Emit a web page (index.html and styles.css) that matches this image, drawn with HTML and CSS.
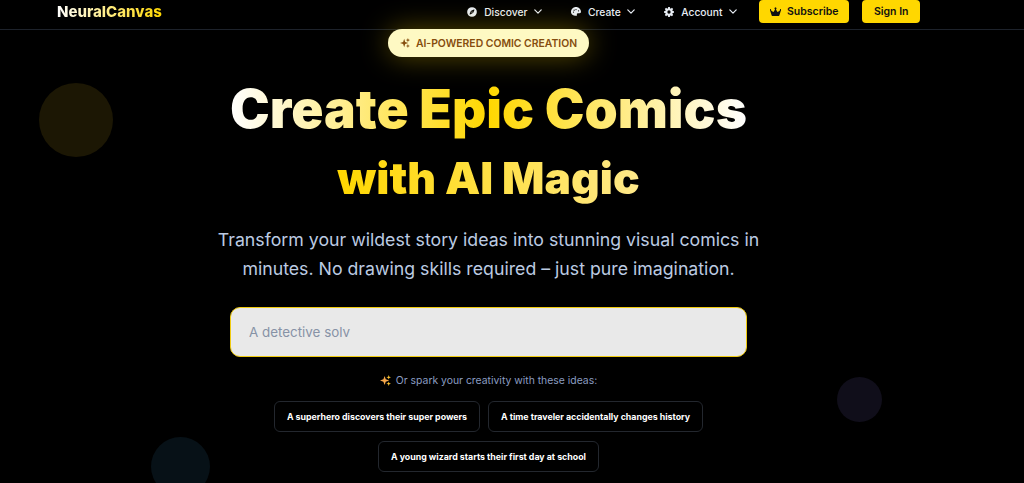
FILE: index.html
```html
<!DOCTYPE html>
<html lang="en">
<head>
    <meta charset="UTF-8">
    <meta name="viewport" content="width=device-width, initial-scale=1.0">
    <title>NeuralCanvas</title>
    <link rel="stylesheet" href="styles.css">
</head>
<body>

<!-- Navigation Bar -->
<div class="navbar">
    <div class="logo">NeuralCanvas</div>
    <div class="nav-links">
        <a href="#" class="nav-link">
            <svg class="nav-icon" viewBox="0 0 512 512"><path fill="currentColor" d="M256 8a248 248 0 1 0 0 496 248 248 0 0 0 0-496zm126 147-65 142a32 32 0 0 1-16 16l-142 65c-16 7-33-10-26-26l65-142a32 32 0 0 1 16-16l142-65c16-7 33 10 26 26zM256 224a32 32 0 1 0 0 64 32 32 0 0 0 0-64z"/></svg>
            Discover
            <svg class="chevron" viewBox="0 0 10 6"><path d="M1 1l4 4 4-4" fill="none" stroke="currentColor" stroke-width="1.5" stroke-linecap="round" stroke-linejoin="round"/></svg>
        </a>
        <a href="#" class="nav-link">
            <svg class="nav-icon" viewBox="0 0 512 512"><path fill="currentColor" fill-rule="evenodd" d="M512 256c0 1 0 2 0 3-1 36-34 61-70 61h-98a48 48 0 0 0-41 73c4 7 7 14 7 22 0 16-10 31-26 34-9 2-18 3-28 3C115 452 0 367 0 256 0 115 115 0 256 0s256 115 256 256zM128 288a32 32 0 1 0 0-64 32 32 0 0 0 0 64zm32-96a32 32 0 1 0 0-64 32 32 0 0 0 0 64zm128-64a32 32 0 1 0-64 0 32 32 0 0 0 64 0zm96 96a32 32 0 1 0 0-64 32 32 0 0 0 0 64z"/></svg>
            Create
            <svg class="chevron" viewBox="0 0 10 6"><path d="M1 1l4 4 4-4" fill="none" stroke="currentColor" stroke-width="1.5" stroke-linecap="round" stroke-linejoin="round"/></svg>
        </a>
        <a href="#" class="nav-link nav-link-last">
            <svg class="nav-icon" viewBox="0 0 24 24"><path fill="currentColor" fill-rule="evenodd" d="M10 0h4l.6 3.200 1.700.7L19 2l3 3-1.900 2.700.7 1.700L24 10v4l-3.200.6-.7 1.700L22 19l-3 3-2.700-1.900-1.700.7L14 24h-4l-.6-3.200-1.700-.7L5 22l-3-3 1.900-2.700-.7-1.700L0 14v-4l3.200-.6.7-1.700L2 5l3-3 2.700 1.900 1.700-.7L10 0zm2 8a4 4 0 1 0 0 8 4 4 0 0 0 0-8z"/></svg>
            Account
            <svg class="chevron" viewBox="0 0 10 6"><path d="M1 1l4 4 4-4" fill="none" stroke="currentColor" stroke-width="1.5" stroke-linecap="round" stroke-linejoin="round"/></svg>
        </a>
        <a href="#" class="btn btn-subscribe">
            <svg class="crown" viewBox="0 0 576 512"><path fill="currentColor" d="M309 106a48 48 0 1 0-42 0L203 233c-10 20-36 26-54 12l-100-80a48 48 0 1 0-39 27l78 247c4 13 16 23 30 23h340c14 0 26-10 30-23l78-247a48 48 0 1 0-39-27l-100 80c-18 14-44 8-54-12L309 106z"/></svg>
            Subscribe
        </a>
        <a href="#" class="btn">Sign In</a>
    </div>
</div>

<!-- Background Circles -->
<div class="circle circle-yellow"></div>
<div class="circle circle-blue"></div>
<div class="circle circle-purple"></div>

<div class="hero">
    <div class="badge">
        <svg class="badge-icon" viewBox="0 0 24 24"><path fill="currentColor" d="M10 2l2.500 7.500L20 12l-7.500 2.500L10 22l-2.500-7.500L0 12l7.500-2.500zM19 0l1.300 3.700L24 5l-3.700 1.300L19 10l-1.300-3.700L14 5l3.700-1.300zM19 14l1.300 3.700L24 19l-3.700 1.300L19 24l-1.300-3.700L14 19l3.700-1.300z"/></svg>
        AI-Powered Comic Creation
    </div>

    <h1 class="title">Create Epic Comics</h1>
    <h2 class="subtitle">with AI Magic</h2>

    <p class="lead">Transform your wildest story ideas into stunning visual comics in minutes. No drawing skills required – just pure imagination.</p>

    <input class="prompt" type="text" placeholder="A detective solv">

    <p class="hint">
        <svg class="hint-icon" viewBox="0 0 24 24"><path fill="#f6a84c" d="M10 2l2.500 7.500L20 12l-7.500 2.500L10 22l-2.500-7.500L0 12l7.500-2.500z"/><path fill="#fbc02d" d="M19 0l1.300 3.700L24 5l-3.700 1.300L19 10l-1.300-3.700L14 5l3.700-1.300zM19 14l1.300 3.700L24 19l-3.700 1.300L19 24l-1.300-3.700L14 19l3.700-1.300z"/></svg>
        Or spark your creativity with these ideas:
    </p>

    <div class="ideas">
        <button class="idea" type="button">A superhero discovers their super powers</button>
        <button class="idea" type="button">A time traveler accidentally changes history</button>
        <button class="idea" type="button">A young wizard starts their first day at school</button>
    </div>
</div>

</body>
</html>
```

FILE: styles.css
```css
/* Basic Reset */
* {
    box-sizing: border-box;
    margin: 0;
    padding: 0;
    font-family: Inter, "Liberation Sans", sans-serif;
}

body {
    position: relative;
    height: 483px;
    overflow: hidden;
    background-color: #000;
    color: #fff;
}

/* Navigation Bar */
.navbar {
    height: 30px;
    display: flex;
    justify-content: space-between;
    padding: 0 104px 0 57px;
    border-bottom: 1px solid #1d222b;
}

.logo {
    font-size: 15px;
    font-weight: 800;
    line-height: 23px;
    background: linear-gradient(90deg, #fff 0%, #ffd700 100%);
    -webkit-background-clip: text;
    background-clip: text;
    color: transparent;
}

.nav-links {
    display: flex;
    align-items: flex-start;
}

.nav-link {
    display: flex;
    align-items: center;
    height: 23px;
    margin-right: 29px;
    color: #e8edf4;
    font-size: 10.3px;
    font-weight: 500;
    text-decoration: none;
}

.nav-link-last {
    margin-right: 22px;
}

.nav-icon {
    width: 10px;
    height: 10px;
    margin-right: 7px;
}

.chevron {
    width: 8px;
    height: 5px;
    margin-left: 6.5px;
}

.btn {
    display: flex;
    align-items: center;
    height: 23px;
    margin-left: 13px;
    padding: 0 11.5px;
    background-color: #ffd700;
    border-radius: 4px;
    color: #111;
    font-size: 10.5px;
    font-weight: 600;
    text-decoration: none;
}

.btn-subscribe {
    margin-left: 0;
    padding: 0 11px;
}

.crown {
    width: 11px;
    height: 10px;
    margin-right: 6px;
}

/* Background Circles */
.circle {
    position: absolute;
    border-radius: 50%;
}

.circle-yellow {
    left: 39px;
    top: 83px;
    width: 74px;
    height: 74px;
    background-color: #1c1704;
}

.circle-blue {
    left: 151px;
    top: 437px;
    width: 59px;
    height: 59px;
    background-color: #071117;
}

.circle-purple {
    left: 837px;
    top: 377px;
    width: 45px;
    height: 45px;
    background-color: #100e1a;
}

/* Hero */
.hero {
    position: relative;
    display: flex;
    flex-direction: column;
    align-items: center;
    width: 977px;
    margin-top: -1px;
}

.badge {
    display: flex;
    align-items: center;
    height: 28px;
    padding: 0 12px;
    background-color: #fef9c3;
    border-radius: 14px;
    box-shadow: 0 0 28px rgba(255, 215, 0, 0.35);
    color: #854d0e;
    font-size: 10.4px;
    font-weight: 600;
    text-transform: uppercase;
}

.badge-icon {
    width: 10px;
    height: 10px;
    margin-right: 6px;
}

.title {
    margin-top: 19px;
    font-size: 53.2px;
    font-weight: 900;
    line-height: 66px;
    background: linear-gradient(90deg, #fff 0%, #ffd700 50%, #fff 100%);
    -webkit-background-clip: text;
    background-clip: text;
    color: transparent;
}

.subtitle {
    margin-top: 9px;
    font-size: 44.4px;
    font-weight: 900;
    line-height: 54px;
    background: linear-gradient(90deg, #ffd700 0%, #ffe98a 100%);
    -webkit-background-clip: text;
    background-clip: text;
    color: transparent;
}

.lead {
    width: 576px;
    margin-top: 20px;
    color: #bccbe2;
    font-size: 17.73px;
    line-height: 29px;
    text-align: center;
}

.prompt {
    width: 517px;
    height: 50px;
    margin-top: 24px;
    padding: 0 18px;
    background-color: #e9e9e9;
    border: 1.5px solid #f0cb10;
    border-radius: 10px;
    font-size: 13.4px;
    outline: none;
}

.prompt::placeholder {
    color: #8792a6;
}

.hint {
    display: flex;
    align-items: center;
    margin-top: 17px;
    color: #8b9dc0;
    font-size: 10.4px;
}

.hint-icon {
    width: 11px;
    height: 11px;
    margin-right: 5px;
}

/* Idea Chips */
.ideas {
    display: flex;
    flex-wrap: wrap;
    justify-content: center;
    gap: 9px 8px;
    width: 517px;
    margin-top: 14px;
}

.idea {
    height: 31px;
    padding: 0 12px;
    background-color: #000;
    border: 1px solid #23272e;
    border-radius: 6px;
    color: #fff;
    font-size: 8.8px;
    font-weight: 700;
}
```
